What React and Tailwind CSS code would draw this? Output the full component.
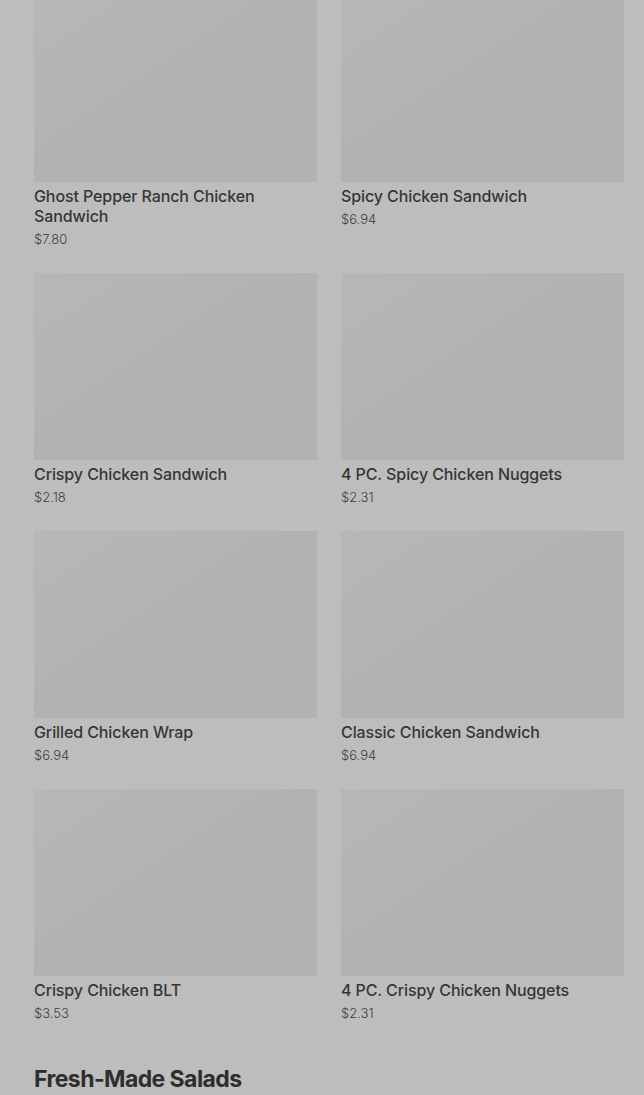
const items = [
  { name: "Ghost Pepper Ranch Chicken Sandwich", price: "$7.80" },
  { name: "Spicy Chicken Sandwich", price: "$6.94" },
  { name: "Crispy Chicken Sandwich", price: "$2.18" },
  { name: "4 PC. Spicy Chicken Nuggets", price: "$2.31" },
  { name: "Grilled Chicken Wrap", price: "$6.94" },
  { name: "Classic Chicken Sandwich", price: "$6.94" },
  { name: "Crispy Chicken BLT", price: "$3.53" },
  { name: "4 PC. Crispy Chicken Nuggets", price: "$2.31" },
]

export default function App() {
  return (
    <div
      className="min-h-[1095px] overflow-hidden bg-[#bdbdbd] pl-[34px] pr-[20px] text-[#363636]"
      style={{ fontFamily: "Inter, 'Noto Sans', sans-serif" }}
    >
      <div className="-mt-[5px] grid grid-cols-2 gap-x-6 gap-y-6">
        {items.map((item) => (
          <div key={item.name} className="flex flex-col">
            <div className="h-[187px] w-full bg-gradient-to-br from-[#b7b7b7] via-[#b2b2b2] to-[#b2b2b2]" />
            <div className="mt-1 text-base font-medium leading-5 tracking-[-0.1px]">{item.name}</div>
            <div className="mt-[3px] text-[13px] font-light leading-5 text-[#3e3e3e]">{item.price}</div>
          </div>
        ))}
      </div>

      <h2 className="mt-[40px] text-[23px] font-bold leading-8 tracking-tight text-[#2e2e2e]">
        Fresh-Made Salads
      </h2>
    </div>
  )
}
